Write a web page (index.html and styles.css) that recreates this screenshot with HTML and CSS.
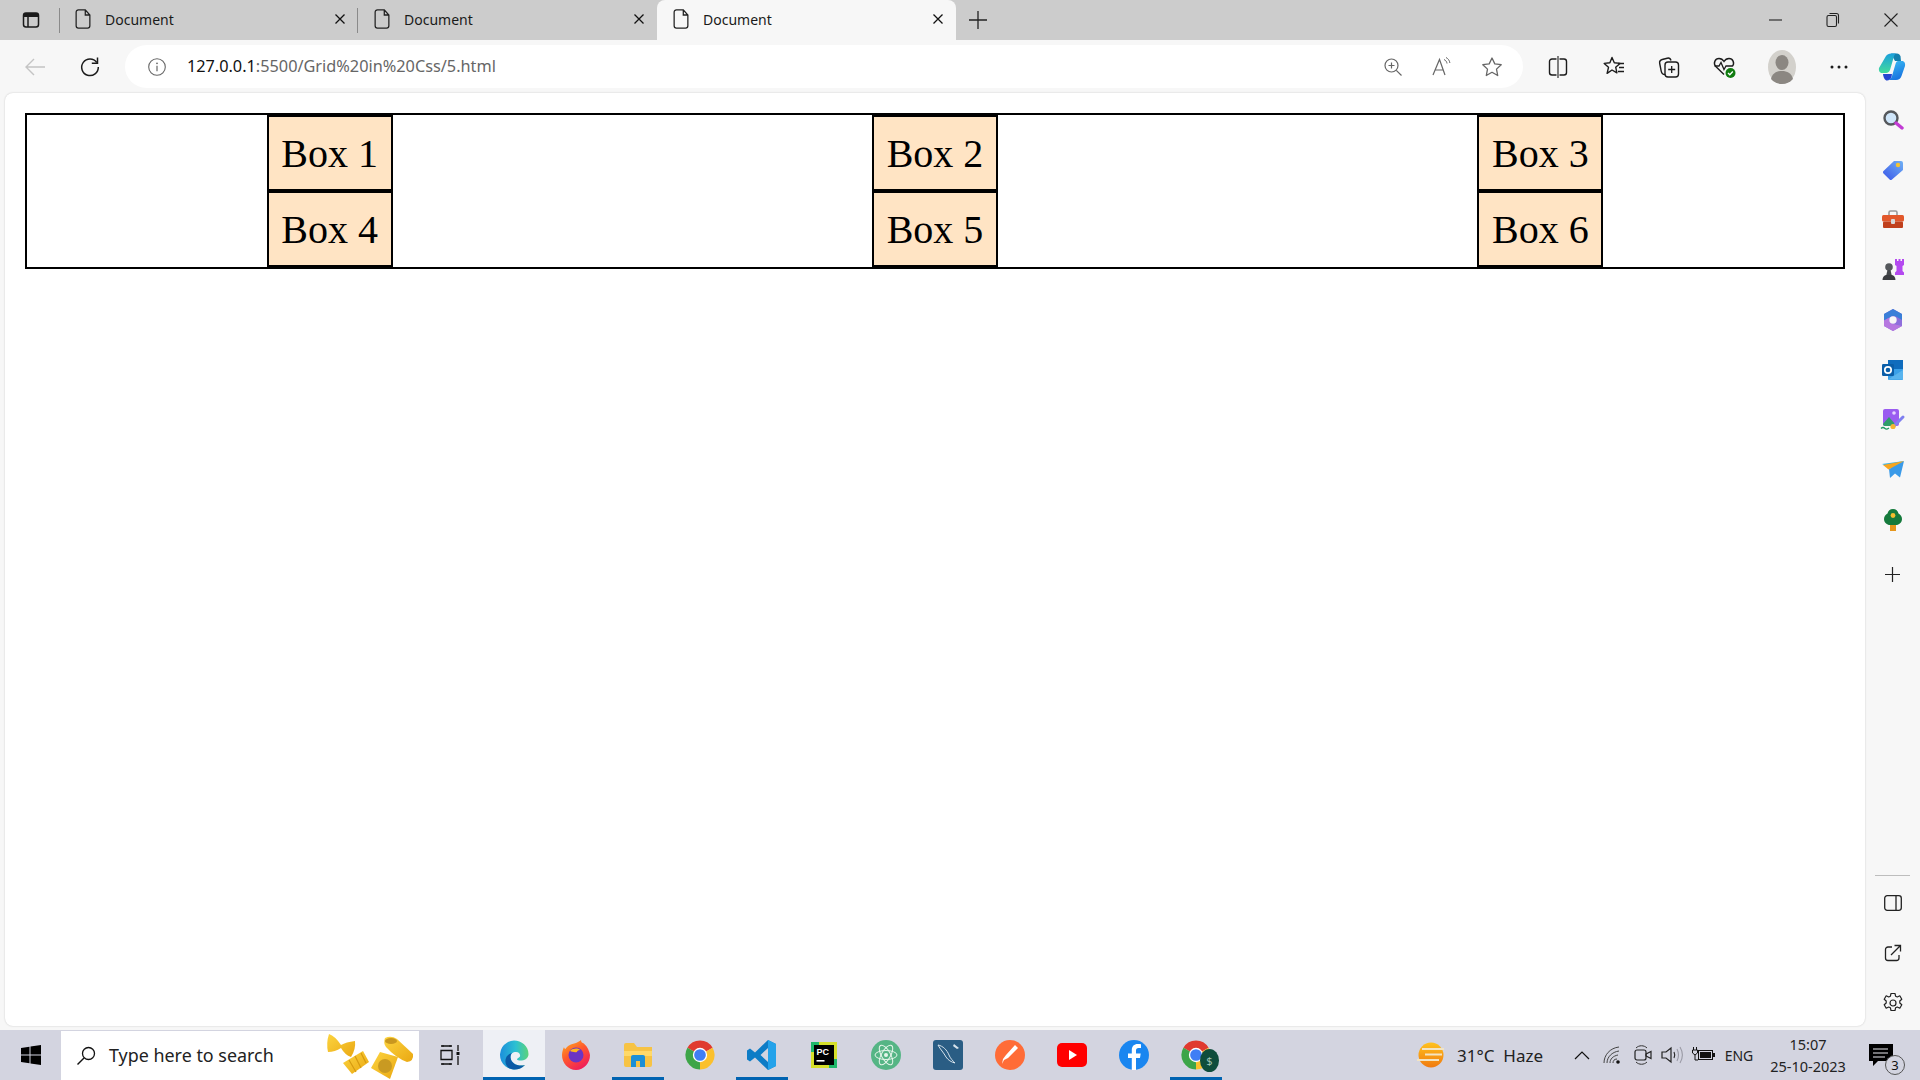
FILE: index.html
```html
<!DOCTYPE html>
<html lang="en">
<head>
  <meta charset="UTF-8">
  <title>Document</title>
  <link rel="stylesheet" href="styles.css">
</head>
<body>

<div class="tabbar">
  <div class="tab-menu">
    <svg width="20" height="20" viewBox="0 0 20 20"><rect x="2.500" y="3" width="15" height="14" rx="2.500" fill="none" stroke="#1a1a1a" stroke-width="1.500"/><path d="M2.500 6V5.500A2.500 2.500 0 0 1 5 3h10a2.500 2.500 0 0 1 2.500 2.500V7H2.500z" fill="#1a1a1a"/><path d="M7 7v10" stroke="#1a1a1a" stroke-width="1.500"/></svg>
  </div>
  <div class="tab">
    <svg class="doc" width="16" height="20" viewBox="0.500 1.500 14 17"><path d="M3.500 2h6l4 4.500V16a2 2 0 0 1-2 2h-8a2 2 0 0 1-2-2V4a2 2 0 0 1 2-2zM9.500 2v4.500h4" fill="none" stroke="#222" stroke-width="1.100"/></svg>
    <span class="tab-title">Document</span>
    <svg class="tab-close" width="12" height="12" viewBox="0 0 12 12"><path d="M1.500 1.500l9 9M10.500 1.500l-9 9" stroke="#111" stroke-width="1.300"/></svg>
  </div>
  <div class="tab">
    <svg class="doc" width="16" height="20" viewBox="0.500 1.500 14 17"><path d="M3.500 2h6l4 4.500V16a2 2 0 0 1-2 2h-8a2 2 0 0 1-2-2V4a2 2 0 0 1 2-2zM9.500 2v4.500h4" fill="none" stroke="#222" stroke-width="1.100"/></svg>
    <span class="tab-title">Document</span>
    <svg class="tab-close" width="12" height="12" viewBox="0 0 12 12"><path d="M1.500 1.500l9 9M10.500 1.500l-9 9" stroke="#111" stroke-width="1.300"/></svg>
  </div>
  <div class="tab active">
    <svg class="doc" width="16" height="20" viewBox="0.500 1.500 14 17"><path d="M3.500 2h6l4 4.500V16a2 2 0 0 1-2 2h-8a2 2 0 0 1-2-2V4a2 2 0 0 1 2-2zM9.500 2v4.500h4" fill="none" stroke="#222" stroke-width="1.100"/></svg>
    <span class="tab-title">Document</span>
    <svg class="tab-close" width="12" height="12" viewBox="0 0 12 12"><path d="M1.500 1.500l9 9M10.500 1.500l-9 9" stroke="#111" stroke-width="1.300"/></svg>
  </div>
  <div class="new-tab">
    <svg width="18" height="18" viewBox="0 0 18 18"><path d="M9 0v18M0 9h18" stroke="#222" stroke-width="1.300"/></svg>
  </div>
  <div class="win-controls">
    <div class="win-btn"><svg width="14" height="14" viewBox="0 0 14 14"><path d="M1 7h13" stroke="#222" stroke-width="1.100"/></svg></div>
    <div class="win-btn"><svg width="14" height="16" viewBox="0 0 14 16"><rect x="1" y="3.500" width="9.500" height="11" rx="1.500" fill="none" stroke="#222" stroke-width="1.100"/><path d="M3.500 1.500h7a2 2 0 0 1 2 2v8" fill="none" stroke="#222" stroke-width="1.100"/></svg></div>
    <div class="win-btn"><svg width="14" height="14" viewBox="0 0 14 14"><path d="M.5.500l13 13M13.500.500l-13 13" stroke="#222" stroke-width="1.100"/></svg></div>
  </div>
</div>

<div class="toolbar">
  <div class="nav-btn">
    <svg width="22" height="20" viewBox="0 0 22 20"><path d="M21 10H2M10 2l-8 8 8 8" fill="none" stroke="#c4c4c4" stroke-width="1.400"/></svg>
  </div>
  <div class="nav-btn">
    <svg width="22" height="22" viewBox="0 0 22 22"><path d="M17.800 6.500A8.300 8.300 0 1 0 19.300 11" fill="none" stroke="#1c1c1c" stroke-width="1.500"/><path d="M18.500 1.500v5.700h-5.700" fill="none" stroke="#1c1c1c" stroke-width="1.500"/></svg>
  </div>
  <div class="address">
    <svg width="20" height="20" viewBox="0 0 20 20"><circle cx="10" cy="10" r="8.300" fill="none" stroke="#666" stroke-width="1.100"/><path d="M10 8.800v5.500" stroke="#666" stroke-width="1.200"/><circle cx="10" cy="6.300" r=".9" fill="#666"/></svg>
    <span class="url"><span class="host">127.0.0.1</span>:5500/Grid%20in%20Css/5.html</span>
    <div class="addr-actions">
      <svg width="20" height="20" viewBox="0 0 20 20"><circle cx="8.500" cy="8.500" r="6.500" fill="none" stroke="#666" stroke-width="1.200"/><path d="M13.300 13.300l5.200 5.200M8.500 5.500v6M5.500 8.500h6" stroke="#666" stroke-width="1.200"/></svg>
      <svg width="22" height="22" viewBox="0 0 22 22"><path d="M2 19L8.500 3.500 14 19M4.300 14h8.400" fill="none" stroke="#666" stroke-width="1.200"/><path d="M13 3.500c1.800.8 2.800 2.300 3 4M15 1.500c2.200 1.100 3.500 3 3.900 5.500" fill="none" stroke="#666" stroke-width="1"/></svg>
      <svg width="22" height="22" viewBox="0 0 22 22"><path d="M11 2l2.800 5.900 6.400.8-4.700 4.400 1.200 6.400L11 16.300l-5.700 3.200 1.200-6.400-4.700-4.400 6.400-.8z" fill="none" stroke="#666" stroke-width="1.300" stroke-linejoin="round"/></svg>
    </div>
  </div>
  <div class="tool-btns">
    <div class="tool-btn"><svg width="22" height="22" viewBox="0 0 22 22"><path d="M9.500 3H5a2.500 2.500 0 0 0-2.500 2.500v11A2.500 2.500 0 0 0 5 19h4.500M12.500 3H17a2.500 2.500 0 0 1 2.500 2.500v11A2.500 2.500 0 0 1 17 19h-4.500" fill="none" stroke="#1c1c1c" stroke-width="1.400"/><path d="M11 0v22" stroke="#1c1c1c" stroke-width="1.100"/></svg></div>
    <div class="tool-btn"><svg width="24" height="24" viewBox="0 0 24 24"><path d="M10 2.500l2.300 5.300 5.700.6-4.300 3.800 1.200 5.600L10 15l-4.900 3.300 1.400-6-4.300-3.900 5.700-.6z" fill="none" stroke="#1c1c1c" stroke-width="1.400" stroke-linejoin="round"/><path d="M16 8.500h6M17 12.500h5M16 16.500h6" stroke="#1c1c1c" stroke-width="1.300"/></svg></div>
    <div class="tool-btn"><svg width="24" height="24" viewBox="0 0 24 24"><rect x="8" y="7" width="13.500" height="15" rx="3" fill="none" stroke="#1c1c1c" stroke-width="1.400"/><path d="M14.700 11v7M11.200 14.500h7" stroke="#1c1c1c" stroke-width="1.300"/><path d="M8 19.500c-2 0-3.400-1.500-3.800-3.400L2.700 8.500C2.300 6.500 3.500 5 5.200 4.500l5-1.300c1.800-.4 3.300.5 3.800 2.300" fill="none" stroke="#1c1c1c" stroke-width="1.400"/></svg></div>
    <div class="tool-btn"><svg width="26" height="26" viewBox="0 0 26 26"><path d="M12 20.500L3.800 12.600C.9 9.500 3 4.500 7 4.500c2.200 0 3.900 1.200 5 3 1.100-1.800 2.800-3 5-3 4 0 6.100 5 3.200 8.100" fill="none" stroke="#1c1c1c" stroke-width="1.400"/><path d="M2.500 12H7l2-3.500 3 7 2-3.500h6" fill="none" stroke="#1c1c1c" stroke-width="1.300"/><circle cx="18.500" cy="19" r="5" fill="#107c10"/><path d="M16 19l1.800 1.800 3-3.300" fill="none" stroke="#fff" stroke-width="1.300"/></svg></div>
    <div class="tool-btn tool-avatar"><svg width="30" height="34" viewBox="0 0 30 34"><ellipse cx="15" cy="17" rx="14" ry="17" fill="#d3d1cc"/><ellipse cx="15" cy="12.500" rx="6.500" ry="7.500" fill="#8b8782"/><path d="M4 29c1.500-6 6-8 11-8s9.500 2 11 8c-3 3.500-7 5-11 5s-8-1.500-11-5z" fill="#8b8782"/></svg></div>
    <div class="tool-btn tool-more"><svg width="20" height="6" viewBox="0 0 20 6"><circle cx="3" cy="3" r="1.500" fill="#1c1c1c"/><circle cx="10" cy="3" r="1.500" fill="#1c1c1c"/><circle cx="17" cy="3" r="1.500" fill="#1c1c1c"/></svg></div>
    <div class="tool-btn tool-copilot">
      <svg width="28" height="28" viewBox="0 0 28 28"><defs><linearGradient id="cop1" x1="0" y1="0" x2="0" y2="1"><stop offset="0" stop-color="#1b9fdc"/><stop offset="1" stop-color="#43dc9c"/></linearGradient><linearGradient id="cop2" x1="0" y1="0" x2=".4" y2="1"><stop offset="0" stop-color="#3bc0f5"/><stop offset="1" stop-color="#1a76e0"/></linearGradient></defs><path d="M13 .5h6c1.500 0 3 1 3.500 3L23 8H17z" fill="#137fae"/><path d="M8 3C9 1.500 11 .5 13 .5h5c-1.500.5-2 2.500-2.500 4.500L12 17c-.8 2.500-3 3-5 3H4c-2.500 0-3.500-2.500-3-5z" fill="url(#cop1)"/><path d="M5 21h9l-.5 3c-.5 2-2.500 3.500-4.500 3.500S5.500 25 5 21z" fill="#2546d0"/><path d="M20 8h4c2.500 0 3.500 2.500 3 5l-3.500 10c-1 2.500-2.500 4-5.500 4H9c3 0 4.500-2 5-4l3.500-12c.5-2 1.500-3 2.500-3z" fill="url(#cop2)"/></svg>
    </div>
  </div>
</div>

<div class="main">
  <div class="page">
    <div class="grid-container">
      <div class="box">Box 1</div>
      <div class="box">Box 2</div>
      <div class="box">Box 3</div>
      <div class="box">Box 4</div>
      <div class="box">Box 5</div>
      <div class="box">Box 6</div>
    </div>
  </div>

  <div class="sidebar">
    <div class="side-btn"><svg width="22" height="22" viewBox="0 0 22 22"><circle cx="9" cy="9" r="6.500" fill="#cfe6fa" stroke="#55585c" stroke-width="2.400"/><path d="M14 14l6 5" stroke="#c23bd4" stroke-width="3.400" stroke-linecap="round"/></svg></div>
    <div class="side-btn"><svg width="22" height="22" viewBox="0 0 22 22"><defs><linearGradient id="tag" x1="0" y1="1" x2="1" y2="0"><stop offset="0" stop-color="#3a56e8"/><stop offset="1" stop-color="#6fb0f5"/></linearGradient></defs><path d="M12 2h7a2 2 0 0 1 2 2v7L10 20.500c-.8.700-1.700.700-2.400 0L1.500 14.500c-.7-.7-.7-1.700 0-2.400z" fill="url(#tag)"/><circle cx="16" cy="6" r="2.200" fill="#f5c330"/></svg></div>
    <div class="side-btn"><svg width="24" height="22" viewBox="0 0 24 22"><path d="M8 6V3.500C8 2.500 8.500 2 9.500 2h5c1 0 1.500.5 1.500 1.500V6" fill="none" stroke="#9a9a9a" stroke-width="1.600"/><rect x="1" y="6" width="22" height="6.500" rx="1.500" fill="#e2582b"/><rect x="2" y="12.500" width="20" height="6.500" rx="1" fill="#c0401c"/><rect x="10" y="10" width="4" height="5" rx="1" fill="#d8d8d8"/></svg></div>
    <div class="side-btn"><svg width="24" height="24" viewBox="0 0 24 24"><circle cx="8" cy="9" r="3.800" fill="#55585c"/><path d="M6.500 12h3l1.200 5H5.300z" fill="#44474b"/><path d="M1.500 22c0-3 1.800-4.500 3.500-5h6c1.700.5 3.500 2 3.500 5z" fill="#3a3c40"/><path d="M14 1h2v2h1.500V1h2v2H21V1h2v6l-1.500 1v5l1.500 1.500V17h-9v-2.500l1.500-1.500V8L14 7z" fill="#b44af0"/></svg></div>
    <div class="side-btn"><svg width="22" height="24" viewBox="0 0 22 24"><path d="M11 1l9 5v12l-9 5-9-5V6z" fill="#8e6fdc"/><path d="M11 1l9 5v6l-6-3.500C12 7.500 9 8 7.500 9.500L2 12.500V6z" fill="#3a7fd8"/><path d="M2 12.500l5.500-3c-1 3 .5 6 3.500 6.500l9 2-9 5-9-5z" fill="#b678e0"/><circle cx="11" cy="12" r="3.700" fill="#f7f7f7"/></svg></div>
    <div class="side-btn"><svg width="22" height="22" viewBox="0 0 22 22"><rect x="6" y="1" width="15" height="10" fill="#0f6cbd"/><path d="M6 10h15v10a1 1 0 0 1-1 1H7a1 1 0 0 1-1-1z" fill="#3aa0e8"/><path d="M6 20.500L21 11v9.500z" fill="#59b4ee"/><rect x="0" y="5" width="12" height="12" rx="1.200" fill="#0a5ea8"/><circle cx="6" cy="11" r="3.200" fill="none" stroke="#fff" stroke-width="1.700"/></svg></div>
    <div class="side-btn"><svg width="26" height="24" viewBox="0 0 26 24"><rect x="3" y="1" width="16" height="17" rx="2" fill="#9a5cf0"/><path d="M3 16l6-7 6 7v2H5a2 2 0 0 1-2-2z" fill="#2f9e6a"/><circle cx="14" cy="5" r="1.800" fill="#e7d4ff"/><path d="M14 18l9-9" stroke="#7f7ff0" stroke-width="3" stroke-linecap="round"/><circle cx="13" cy="18.500" r="2.600" fill="#f2b632"/><path d="M1 20.500c2-2 3-1 4 0s2 1 4-.5" fill="none" stroke="#1e9a62" stroke-width="1.300"/></svg></div>
    <div class="side-btn"><svg width="24" height="20" viewBox="0 0 24 20"><path d="M1 4l22-3-11 8z" fill="#35b2ea"/><path d="M23 1L8 9l1 9 5-4.500 5 4z" fill="#3a9ae8"/><path d="M23 1L7.500 9.500 2 5z" fill="#f7a51e"/></svg></div>
    <div class="side-btn"><svg width="20" height="24" viewBox="0 0 20 24"><rect x="7" y="15" width="6" height="8" fill="#e6961c"/><path d="M10 1c3 0 5 2 5.500 4.500 2 1 3.500 3 3.500 5.500 0 3.500-3 6-6 6H7c-3 0-6-2.500-6-6 0-2.500 1.500-4.500 3.500-5.500C5 3 7 1 10 1z" fill="#157a3c"/><circle cx="10" cy="7.500" r="2.400" fill="#f2be2e"/></svg></div>
    <div class="side-btn side-add"><svg width="15" height="15" viewBox="0 0 15 15"><path d="M7.500 0v15M0 7.500h15" stroke="#222" stroke-width="1.200"/></svg></div>
    <div class="side-bottom">
      <div class="side-divider"></div>
      <div class="side-btn"><svg width="18" height="16" viewBox="0 0 18 16"><rect x=".7" y=".7" width="16.600" height="14.600" rx="2.500" fill="none" stroke="#222" stroke-width="1.300"/><path d="M12 1v14" stroke="#222" stroke-width="1.300"/></svg></div>
      <div class="side-btn"><svg width="18" height="18" viewBox="0 0 18 18"><path d="M8 3H4a2.500 2.500 0 0 0-2.500 2.500V14A2.500 2.500 0 0 0 4 16.500h8.500A2.500 2.500 0 0 0 15 14v-3" fill="none" stroke="#222" stroke-width="1.300"/><path d="M7 11l9-9M10.500 1.500H16.500V7.500" fill="none" stroke="#222" stroke-width="1.300"/></svg></div>
      <div class="side-btn"><svg width="22" height="22" viewBox="0 0 22 22"><path d="M9 1.500h4l.6 2.700 1.700.8 2.500-1.200 2 3.400-2 1.800v2l2 1.800-2 3.400-2.500-1.200-1.700.8-.6 2.700H9l-.6-2.700-1.700-.8-2.500 1.200-2-3.400 2-1.800V9l-2-1.800 2-3.400L6.700 5l1.700-.8z" fill="none" stroke="#222" stroke-width="1.200" stroke-linejoin="round"/><circle cx="11" cy="11" r="3" fill="none" stroke="#222" stroke-width="1.200"/></svg></div>
    </div>
  </div>
</div>

<div class="taskbar">
  <div class="start">
    <svg width="20" height="20" viewBox="0 0 20 20"><path d="M0 3l8.500-1.200V9.500H0zM9.500 1.600L20 0v9.500H9.500zM0 10.500h8.500v7.700L0 17zM9.500 10.500H20V20L9.500 18.400z" fill="#000"/></svg>
  </div>
  <div class="search">
    <svg width="20" height="20" viewBox="0 0 20 20"><circle cx="12.500" cy="7.500" r="6" fill="none" stroke="#111" stroke-width="1.300"/><path d="M8 12l-6.500 6.500" stroke="#111" stroke-width="1.400"/></svg>
    <span class="search-text">Type here to search</span>
    <svg class="pasta" width="88" height="46" viewBox="0 0 88 46">
      <defs><linearGradient id="pst" x1="0" y1="0" x2="1" y2="1"><stop offset="0" stop-color="#fcd440"/><stop offset="1" stop-color="#eaa812"/></linearGradient></defs>
      <path d="M3 1Q9 3 15 12 20 9 29 8 30 16 25 24 19 22 15 15 9 19 2 19 0 10 3 1z" fill="url(#pst)"/>
      <path d="M17 30L37 18 43 29 26 41z" fill="url(#pst)"/>
      <path d="M23 27l7 12M29 23l6 12M35 20l5 10" stroke="#d69a10" stroke-width="1.200"/>
      <path d="M54 19l18 5-8 22-19-11z" fill="url(#pst)"/>
      <circle cx="59" cy="33" r="7" fill="#c99a22"/>
      <path d="M59 5Q65 2 71 6L87 21Q88 28 81 29 70 25 60 14 57 10 59 5z" fill="url(#pst)"/>
      <ellipse cx="65" cy="8" rx="6" ry="3" fill="#c9971f"/>
    </svg>
  </div>
  <div class="task-view">
    <svg width="22" height="20" viewBox="0 0 22 20"><path d="M1 1h11M1 19h11M1 5.500h11v9H1z" fill="none" stroke="#111" stroke-width="1.300"/><path d="M3 0v2M10 0v2M3 18v2M10 18v2" stroke="#111"/><path d="M18 0v6M18 11v9" stroke="#111" stroke-width="1.300"/><rect x="16.500" y="7" width="3" height="3" fill="#111"/></svg>
  </div>

  <div class="apps">
    <div class="app app-active app-running">
      <svg width="30" height="30" viewBox="0 0 30 30"><defs><linearGradient id="edge" x1="0" y1="0" x2="1" y2="0"><stop offset="0" stop-color="#1c8fdc"/><stop offset=".55" stop-color="#2cc0d2"/><stop offset="1" stop-color="#5cd37a"/></linearGradient></defs><path d="M15 .5A14.500 14.500 0 1 0 26 25C20 27 12 24 11.500 17.500 11.200 14 13.500 12 17 12c3 0 4.500 2 4 4.500-1.500 1.500-3 2-3 3 1 1.500 6 1.500 9-.5 2-1.500 2.500-3.500 2.500-5C29.500 6 22.500.5 15 .5z" fill="url(#edge)"/><path d="M11.500 17.500C12 24 20 27 26 25A14.500 14.500 0 0 1 15 29.500C8 29.500 5 23 7 18c1-3 4-4.500 6-5-1 1-1.500 2.500-1.500 4.500z" fill="#0b5aa6"/></svg>
    </div>
    <div class="app">
      <svg width="28" height="30" viewBox="0 0 28 30"><defs><linearGradient id="ff" x1="0" y1="0" x2=".6" y2="1"><stop offset="0" stop-color="#ffb51e"/><stop offset=".5" stop-color="#ff5a2c"/><stop offset="1" stop-color="#f01f5a"/></linearGradient></defs><path d="M14 3c2-1 4-2 5-3 0 2 1 3 2 3 3 2 6 6 7 12 0 8-6 15-14 15S0 23 0 15c0-3 1-6 2-8 0 1 1 2 1.500 2C5 6 9 4 14 3z" fill="url(#ff)"/><circle cx="14" cy="15" r="7.500" fill="#6c34c4"/><path d="M8 11c3-3 8-3 10-1-2 0-3 1-3 2-2 .5-5 0-7-1z" fill="#ffb51e"/></svg>
    </div>
    <div class="app app-running">
      <svg width="28" height="26" viewBox="0 0 28 26"><path d="M0 3a2 2 0 0 1 2-2h8l3 4h15v18a2 2 0 0 1-2 2H2a2 2 0 0 1-2-2z" fill="#f7c344"/><path d="M0 9h28v5H0z" fill="#ffd968"/><path d="M7 25V15a2 2 0 0 1 2-2h10a2 2 0 0 1 2 2v10h-5v-6h-4v6z" fill="#1b8fd6"/></svg>
    </div>
    <div class="app">
      <svg width="30" height="30" viewBox="0 0 30 30"><path d="M15 15L2.440 7.750A14.500 14.500 0 0 1 27.560 7.750z" fill="#e03a2f"/><path d="M15 15L27.560 7.750A14.500 14.500 0 0 1 15 29.500z" fill="#fbc02d"/><path d="M15 15V29.500A14.500 14.500 0 0 1 2.440 7.750z" fill="#3da548"/><circle cx="15" cy="15" r="6.500" fill="#3f7ef5" stroke="#fff" stroke-width="1.300"/></svg>
    </div>
    <div class="app app-running">
      <svg width="30" height="30" viewBox="0 0 30 30"><path d="M21 0l8 4v22l-8 4L8 17.500 3 21.500l-3-2v-9l3-2 5 4zM21 8l-7.500 7 7.500 7z" fill="#0d7cc6"/><path d="M21 0l8 4v22l-8 4z" fill="#24a2ea"/></svg>
    </div>
    <div class="app">
      <svg width="26" height="26" viewBox="0 0 26 26"><rect width="26" height="26" fill="#d6e02a"/><path d="M0 0h8v4H4v6H0zM26 26h-8v-3h5v-6h3z" fill="#1fb86b"/><rect x="3" y="3" width="20" height="20" fill="#000"/><text class="pc-label" x="5.500" y="13">PC</text><rect x="5.500" y="18" width="8" height="1.600" fill="#fff"/></svg>
    </div>
    <div class="app">
      <svg width="30" height="30" viewBox="0 0 30 30"><circle cx="15" cy="15" r="15" fill="#55b585"/><g fill="none" stroke="#e5f5ea" stroke-width="1"><ellipse cx="15" cy="15" rx="11" ry="4.500"/><ellipse cx="15" cy="15" rx="11" ry="4.500" transform="rotate(60 15 15)"/><ellipse cx="15" cy="15" rx="11" ry="4.500" transform="rotate(120 15 15)"/></g><circle cx="15" cy="15" r="2" fill="#e5f5ea"/></svg>
    </div>
    <div class="app">
      <svg width="30" height="30" viewBox="0 0 30 30"><rect width="30" height="30" rx="3" fill="#2a5d84"/><path d="M5 5c5 1 9 5 11 10 1 3 4 6 6 8-4-1-7-3-9-6-2-4-6-8-8-12z" fill="none" stroke="#d7e3ec" stroke-width="1"/><path d="M21 4l5 4-2 1-4-3z" fill="#d7e3ec"/></svg>
    </div>
    <div class="app">
      <svg width="30" height="30" viewBox="0 0 30 30"><circle cx="15" cy="15" r="15" fill="#ff6c37"/><path d="M20 5l3 3-10 10-4 2-2 4 1-5 3-4z" fill="#fff"/></svg>
    </div>
    <div class="app">
      <svg width="30" height="24" viewBox="0 0 30 24"><rect width="30" height="24" rx="5" fill="#f00"/><path d="M12 7l8 5-8 5z" fill="#fff"/></svg>
    </div>
    <div class="app">
      <svg width="30" height="30" viewBox="0 0 30 30"><circle cx="15" cy="15" r="15" fill="#1a86f0"/><path d="M17 30V18h4l.7-4.500H17v-3c0-1.400.7-2.400 2.500-2.400H22V4.300C21 4.100 20 4 18.700 4c-3.600 0-5.900 2.200-5.900 6v3.500H9V18h3.800v12z" fill="#fff"/></svg>
    </div>
    <div class="app app-running">
      <div class="app-stack">
        <svg width="30" height="30" viewBox="0 0 30 30"><path d="M15 15L2.440 7.750A14.500 14.500 0 0 1 27.560 7.750z" fill="#e03a2f"/><path d="M15 15L27.560 7.750A14.500 14.500 0 0 1 15 29.500z" fill="#fbc02d"/><path d="M15 15V29.500A14.500 14.500 0 0 1 2.440 7.750z" fill="#3da548"/><circle cx="15" cy="15" r="6.500" fill="#3f7ef5" stroke="#fff" stroke-width="1.300"/></svg>
        <span class="profile-badge">$</span>
      </div>
    </div>
  </div>

  <div class="tray">
    <div class="weather">
      <svg width="30" height="30" viewBox="0 0 30 30"><defs><linearGradient id="sun" x1="0" y1="0" x2="0" y2="1"><stop offset="0" stop-color="#ffc21e"/><stop offset="1" stop-color="#f07a10"/></linearGradient></defs><circle cx="15" cy="15" r="12.500" fill="url(#sun)"/><path d="M6 9h22M9 14.500h17M1 20h22" stroke="#f3e4c2" stroke-width="1.800"/></svg>
      <span class="weather-text">31°C&nbsp;&nbsp;Haze</span>
    </div>
    <div class="tray-icon tray-chevron"><svg width="16" height="10" viewBox="0 0 16 10"><path d="M1 9l7-7 7 7" fill="none" stroke="#111" stroke-width="1.200"/></svg></div>
    <div class="tray-icon"><svg width="20" height="18" viewBox="0 0 20 18"><path d="M1 17C1 9 7 2 16 1M4 17c0-6 5-11 12-12M7 17c0-4 3-7 8-8M10 17c0-2 1-4 4-4" fill="none" stroke="#444" stroke-width="1"/><circle cx="15" cy="16" r="1.800" fill="#111"/></svg></div>
    <div class="tray-icon"><svg width="20" height="22" viewBox="0 0 20 22"><path d="M3 4c3-3 8-3 11 0M3 18c3 3 8 3 11 0" fill="none" stroke="#333" stroke-width="1"/><rect x="2" y="6" width="11" height="10" rx="2" fill="none" stroke="#222" stroke-width="1.200"/><path d="M13 10l5-2.500v7L13 12z" fill="none" stroke="#222" stroke-width="1.200"/></svg></div>
    <div class="tray-icon"><svg width="24" height="20" viewBox="0 0 24 20"><path d="M1 7h4l5-4v14l-5-4H1z" fill="none" stroke="#222" stroke-width="1.200"/><path d="M13 7c1 2 1 4 0 6" fill="none" stroke="#222" stroke-width="1.100"/><path d="M16 4c2 4 2 8 0 12M19 2c3 5 3 11 0 16" fill="none" stroke="#9a9aa5" stroke-width="1.100"/></svg></div>
    <div class="tray-icon"><svg width="24" height="16" viewBox="0 0 24 16"><path d="M2.500 0v3M5.500 0v3M1.500 3h5v3L4 8 1.500 6zM4 8v5h3" fill="none" stroke="#111" stroke-width="1"/><rect x="7.500" y="3.500" width="14" height="9" fill="none" stroke="#111"/><rect x="9" y="5" width="11" height="6" fill="#111"/><rect x="22" y="6" width="2" height="4" fill="#111"/></svg></div>
    <span class="lang">ENG</span>
    <div class="clock"><span>15:07</span><span>25-10-2023</span></div>
    <div class="notify">
      <svg width="24" height="22" viewBox="0 0 24 22"><path d="M0 0h24v17H9l-5 5v-5H0z" fill="#000"/><path d="M4 5h15M4 9h15M4 13h12" stroke="#e8e8ee" stroke-width="1.200"/></svg>
      <span class="notify-badge">3</span>
    </div>
  </div>
</div>

</body>
</html>
```

FILE: styles.css
```css
* {
  box-sizing: border-box;
}
body {
  margin: 0;
  width: 1920px;
  height: 1080px;
  overflow: hidden;
  display: flex;
  flex-direction: column;
  background-color: #f7f7f7;
  font-family: "Noto Sans", sans-serif;
  color: #1a1a1a;
}
svg {
  display: block;
  flex-shrink: 0;
}

/* tab strip */
.tabbar {
  height: 40px;
  display: flex;
  background-color: #cccccc;
}
.tab-menu {
  width: 59px;
  padding-left: 21px;
  display: flex;
  align-items: center;
  position: relative;
}
.tab-menu::after,
.tab + .tab:not(.active)::before {
  content: "";
  position: absolute;
  top: 8px;
  bottom: 7px;
  right: -1px;
  width: 1px;
  background-color: #8a8a8a;
}
.tab + .tab:not(.active)::before {
  right: auto;
  left: -1px;
}
.tab {
  position: relative;
  width: 299px;
  display: flex;
  align-items: center;
  padding-left: 16px;
  padding-bottom: 2px;
  font-size: 14px;
}
.tab.active {
  background-color: #f7f7f7;
  border-radius: 8px 8px 0 0;
}
.doc {
  margin-right: 14px;
}
.tab-title {
  width: 233px;
  white-space: nowrap;
}
.tab-close {
  margin-left: -4px;
}
.new-tab {
  margin-left: 13px;
  display: flex;
  align-items: center;
}
.win-controls {
  margin-left: auto;
  display: flex;
}
.win-btn {
  width: 58px;
  display: flex;
  align-items: center;
  justify-content: center;
}

/* address row */
.toolbar {
  height: 53px;
  padding-top: 5px;
  padding-bottom: 5px;
  display: flex;
  align-items: center;
}
.nav-btn {
  width: 56px;
  margin-left: 7px;
  margin-right: -7px;
  display: flex;
  justify-content: center;
}
.nav-btn + .nav-btn {
  margin-left: 6px;
  margin-right: 0;
}
.address {
  width: 1400px;
  height: 43px;
  margin-left: 7px;
  padding-left: 22px;
  background-color: #fff;
  border-radius: 22px;
  display: flex;
  align-items: center;
}
.url {
  margin-left: 20px;
  margin-bottom: 1px;
  font-size: 16.300px;
  color: #666;
  white-space: nowrap;
}
.host {
  color: #111;
}
.addr-actions {
  margin-left: auto;
  margin-right: 20px;
  display: flex;
  align-items: center;
  gap: 28px;
}
.tool-btns {
  display: flex;
  margin-left: 7px;
}
.tool-btn {
  width: 55.500px;
  display: flex;
  align-items: center;
  justify-content: center;
}
.tool-avatar {
  margin-left: 2px;
}
.tool-more {
  margin-left: 1px;
}
.tool-copilot {
  margin-left: -2px;
}

/* page and side panel */
.main {
  height: 937px;
  display: flex;
}
.page {
  width: 1860px;
  height: 933px;
  margin-left: 5px;
  padding: 20px;
  background-color: #fff;
  border-radius: 8px;
  box-shadow: 0 0 2px rgba(0,0,0,0.2);
}
.grid-container {
  display: grid;
  grid-template-columns: repeat(3, 1fr);
  justify-items: center;
  border: 2px solid #000;
  font-family: "Liberation Serif", serif;
  font-size: 40px;
}
.box {
  padding: 12.500px 12.650px 12.500px;
  background-color: bisque;
  border: 2px solid #000;
  color: #000;
  white-space: nowrap;
}
.sidebar {
  width: 55px;
  padding-top: 2px;
  display: flex;
  flex-direction: column;
  align-items: center;
}
.side-btn {
  width: 55px;
  height: 50px;
  flex-shrink: 0;
  display: flex;
  align-items: center;
  justify-content: center;
}
.side-add {
  margin-top: 4px;
}
.side-bottom {
  margin-top: auto;
  padding-bottom: 2px;
}
.side-divider {
  width: 35px;
  height: 1px;
  margin: 0 auto 2px;
  background-color: #bdbdbd;
}

/* windows taskbar */
.taskbar {
  height: 50px;
  display: flex;
  align-items: stretch;
  background-color: #d3d4e0;
}
.start {
  width: 61px;
  display: flex;
  align-items: center;
  justify-content: center;
}
.search {
  width: 358px;
  margin-top: 1px;
  padding-left: 15px;
  display: flex;
  align-items: center;
  background-color: #fff;
}
.search-text {
  margin-left: 13px;
  margin-bottom: 2px;
  font-size: 17.900px;
  color: #222;
  white-space: nowrap;
}
.pasta {
  margin-left: auto;
  margin-right: 5px;
}
.task-view {
  width: 64px;
  display: flex;
  align-items: center;
  justify-content: center;
}
.apps {
  display: flex;
}
.app {
  width: 62px;
  display: flex;
  align-items: center;
  justify-content: center;
  position: relative;
}
.app-active {
  background-color: #eef0f5;
}
.app-running::after {
  content: "";
  position: absolute;
  left: 5px;
  right: 5px;
  bottom: 0;
  height: 3px;
  background-color: #0063b1;
}
.app-active::after {
  left: 0;
  right: 0;
}
.pc-label {
  font-family: "Liberation Sans", sans-serif;
  font-size: 9px;
  font-weight: 700;
  fill: #fff;
}
.app-stack {
  position: relative;
}
.profile-badge {
  position: absolute;
  right: -8px;
  bottom: -2px;
  width: 19px;
  height: 23px;
  border-radius: 50%;
  background-color: #0f4d3c;
  color: #9fc4b5;
  font-size: 11px;
  line-height: 23px;
  text-align: center;
}
.tray {
  margin-left: auto;
  display: flex;
  align-items: center;
}
.weather {
  display: flex;
  align-items: center;
  width: 150px;
  gap: 11px;
}
.weather-text {
  font-size: 17px;
  white-space: nowrap;
  color: #222;
}
.tray-icon {
  width: 30px;
  display: flex;
  justify-content: center;
}
.tray-chevron {
  width: 32px;
}
.lang {
  width: 40px;
  margin-left: 1px;
  font-size: 14px;
  text-align: center;
  color: #222;
}
.clock {
  width: 96px;
  margin-left: 1px;
  display: flex;
  flex-direction: column;
  align-items: center;
  gap: 3px;
  font-size: 14.500px;
  line-height: 19px;
  color: #222;
}
.notify {
  width: 64px;
  padding-left: 13px;
  position: relative;
}
.notify-badge {
  position: absolute;
  left: 29px;
  top: 11px;
  width: 20px;
  height: 20px;
  border: 1px solid #555;
  border-radius: 50%;
  background-color: #d3d4e0;
  font-size: 13px;
  line-height: 18px;
  text-align: center;
  color: #111;
}
```
